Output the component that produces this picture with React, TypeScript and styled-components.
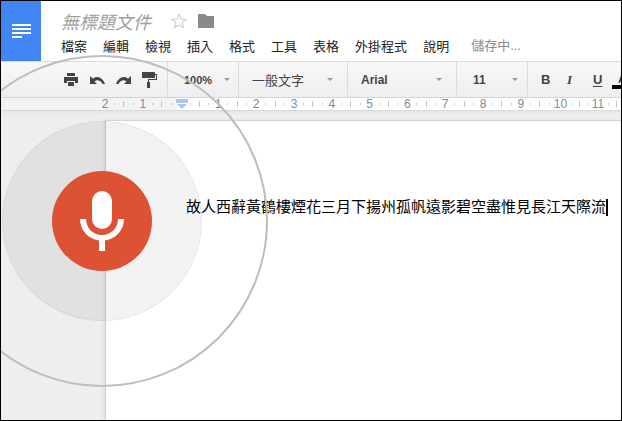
import React from "react";
import styled, { createGlobalStyle } from "styled-components";

const Global = createGlobalStyle`
  html, body { margin: 0; padding: 0; background: #fff; }
  #root { width: 622px; height: 421px; }
`;

const CJK = `"Liberation Sans", "Noto Sans CJK TC", sans-serif`;

const Frame = styled.div`
  position: relative;
  width: 622px;
  height: 421px;
  box-sizing: border-box;
  border: 1px solid #000;
  overflow: hidden;
  display: flex;
  flex-direction: column;
  background: #fff;
  font-family: ${CJK};
`;

const Header = styled.header`
  display: flex;
  height: 60px;
  flex: none;
`;

const Logo = styled.div`
  width: 40px;
  background: #4285f4;
  display: flex;
  align-items: center;
  justify-content: center;
`;

const Titles = styled.div`
  padding: 9px 0 0 20px;
  display: flex;
  flex-direction: column;
  gap: 5px;
`;

const TitleRow = styled.div`
  display: flex;
  align-items: center;
  height: 22px;
`;

const DocTitle = styled.span`
  font-size: 18px;
  font-style: italic;
  color: #a0a0a0;
  width: 110px;
`;

const StarIcon = styled.svg`
  flex: none;
`;

const FolderIcon = styled.svg`
  flex: none;
  margin-left: 11px;
`;

const MenuRow = styled.nav`
  display: flex;
  align-items: center;
  height: 17px;
`;

const MenuItem = styled.span`
  font-size: 13px;
  color: #222;
  margin-right: 16px;
`;

const Saving = styled.span`
  font-size: 13px;
  color: #8a8a8a;
  margin-left: 6px;
  margin-top: -3px;
`;

const Toolbar = styled.div`
  height: 37px;
  flex: none;
  box-sizing: border-box;
  display: flex;
  align-items: center;
  border-top: 1px solid #dcdcdc;
  border-bottom: 1px solid #d6d6d6;
  background: linear-gradient(#f8f8f8, #eeeeee);
  overflow: hidden;
  padding-left: 63px;
`;

const IconGroup = styled.div`
  display: flex;
  align-items: center;
  gap: 11px;
  width: 103px;
  flex: none;
  height: 100%;
`;

const Select = styled.div<{ $w: number; $left: number; $right: number; $size: number; $bold?: boolean }>`
  width: ${(p) => p.$w}px;
  flex: none;
  height: 100%;
  box-sizing: border-box;
  border-left: 1px solid #dcdcdc;
  display: flex;
  align-items: center;
  justify-content: space-between;
  padding: 0 ${(p) => p.$right}px 0 ${(p) => p.$left}px;
  font-size: ${(p) => p.$size}px;
  color: #444;
  font-weight: ${(p) => (p.$bold ? 700 : 400)};
`;

const Caret = styled.i`
  width: 0;
  height: 0;
  border-left: 3px solid transparent;
  border-right: 3px solid transparent;
  border-top: 3px solid #999;
`;

const Format = styled.div`
  border-left: 1px solid #dcdcdc;
  height: 100%;
  flex: none;
  display: flex;
  align-items: center;
  padding-left: 13px;
  font-size: 13px;
  font-weight: 700;
  color: #444;
`;

const FormatCell = styled.span`
  width: 26px;
  flex: none;
`;

const ItalicMark = styled(FormatCell)`
  font-style: italic;
  font-family: "Liberation Serif", serif;
`;

const UnderMark = styled(FormatCell)`
  text-decoration: underline;
  text-underline-offset: 2px;
`;

const ColorMark = styled.span`
  width: 14px;
  flex: none;
  margin-left: -7px;
  padding-left: 6px;
  height: 16px;
  margin-top: 3px;
  border-bottom: 4px solid #000;
  box-sizing: border-box;
  line-height: 12px;
  font-size: 11px;
`;

const Ruler = styled.div`
  height: 13px;
  flex: none;
  background: #fff;
  border-bottom: 1px solid #d9d9d9;
  box-sizing: border-box;
  display: flex;
  align-items: center;
  position: relative;
  overflow: hidden;
`;

const RulerMargin = styled.div`
  position: absolute;
  left: 0;
  top: 0;
  bottom: 0;
  width: 176px;
  background: #f3f3f3;
`;

const RulerTrack = styled.div`
  position: relative;
  display: flex;
  margin-left: 99.300px;
`;

const RulerCell = styled.div`
  width: 37.800px;
  flex: none;
  display: grid;
  grid-template-columns: repeat(4, 1fr);
  align-items: center;
  justify-items: center;
  font-size: 12px;
  line-height: 12px;
  color: #7f8c99;
`;

const Tick = styled.i<{ $h: number }>`
  width: 1px;
  height: ${(p) => p.$h}px;
  background: #c4c4c4;
`;

const IndentMark = styled.svg`
  position: absolute;
  left: 175px;
  top: 1px;
`;

const Canvas = styled.div`
  flex: 1;
  background: linear-gradient(#e6e6e6, #eeeeee 4px);
  padding: 9px 0 0 104px;
  display: flex;
`;

const Page = styled.main`
  flex: 1;
  background: #fff;
  border-top: 1px solid #d4d4d4;
  border-left: 1px solid #cfcfcf;
  box-shadow: -2px 0 3px rgba(0, 0, 0, 0.06);
  padding-top: 76px;
  padding-left: 80px;
`;

const Line = styled.div`
  font-size: 15px;
  line-height: 20px;
  color: #000;
  white-space: nowrap;
  display: flex;
  align-items: center;
`;

const Cursor = styled.i`
  display: inline-block;
  width: 2px;
  height: 17px;
  background: #000;
`;

const Ring = styled.div`
  position: absolute;
  left: -65px;
  top: 54px;
  width: 332px;
  height: 332px;
  box-sizing: border-box;
  border-radius: 50%;
  border: 2px solid #bdbdbd;
  pointer-events: none;
`;

const Halo = styled.div`
  position: absolute;
  left: 1px;
  top: 120px;
  width: 200px;
  height: 200px;
  box-sizing: border-box;
  border-radius: 50%;
  background: rgba(0, 0, 0, 0.05);
  border: 1px solid rgba(0, 0, 0, 0.05);
  display: flex;
  align-items: center;
  justify-content: center;
`;

const MicButton = styled.div`
  width: 100px;
  height: 100px;
  border-radius: 50%;
  background: #dd5233;
  display: flex;
  align-items: center;
  justify-content: center;
`;

const menus = ["檔案", "編輯", "檢視", "插入", "格式", "工具", "表格", "外掛程式", "說明"];

function RulerMarks() {
  const labels = ["2", "1", "", "1", "2", "3", "4", "5", "6", "7", "8", "9", "10", "11"];
  return (
    <RulerTrack>
      {labels.map((l, i) => (
        <RulerCell key={i}>
          <span>{l}</span>
          <Tick $h={2} />
          <Tick $h={6} />
          <Tick $h={2} />
        </RulerCell>
      ))}
    </RulerTrack>
  );
}

export default function App() {
  return (
    <>
      <Global />
      <Frame>
        <Header>
          <Logo>
            <svg width="19" height="14" viewBox="0 0 19 14" fill="#fff">
              <rect y="0" width="19" height="2" />
              <rect y="4" width="19" height="2" />
              <rect y="8" width="19" height="2" />
              <rect y="12" width="10" height="2" />
            </svg>
          </Logo>
          <Titles>
            <TitleRow>
              <DocTitle>無標題文件</DocTitle>
              <StarIcon width="16" height="16" viewBox="0 0 24 24" fill="none" stroke="#ccc" strokeWidth="1.6">
                <path d="M12 2l3 7 7.500.6-5.700 4.900 1.800 7.400L12 18l-6.600 3.900 1.800-7.400L1.500 9.600 9 9z" />
              </StarIcon>
              <FolderIcon width="16" height="14" viewBox="0 0 16 14" fill="#8a8a8a">
                <path d="M0 0h7l2 2h7v12H0z" />
              </FolderIcon>
            </TitleRow>
            <MenuRow>
              {menus.map((m) => (
                <MenuItem key={m}>{m}</MenuItem>
              ))}
              <Saving>儲存中...</Saving>
            </MenuRow>
          </Titles>
        </Header>
        <Toolbar>
          <IconGroup>
            <svg width="15" height="13" viewBox="0 0 15 13" fill="#444">
              <path d="M3 0h8v3H3zM0 4h14v6h-3V8H3v2H0zM4 9h6v4H4z" />
            </svg>
            <svg width="15" height="8" viewBox="0 0 15 8" fill="#444">
              <path d="M0 0v8h7L4.500 5.500C7 3.500 10.500 4 12.500 8H15C13 2 7-1 3 2.800z" />
            </svg>
            <svg width="15" height="8" viewBox="0 0 15 8" fill="#444">
              <path d="M15 0v8H8l2.500-2.500C8 3.500 4.500 4 2.500 8H0C2 2 8-1 12 2.800z" />
            </svg>
            <svg width="15" height="16" viewBox="0 0 15 16" fill="#444">
              <path d="M0 0h13v6H0zM13 2h2v6H7v2h1v6H5v-6h1V7h8V3h-1z" />
            </svg>
          </IconGroup>
          <Select $w={71} $left={16} $right={8} $size={11} $bold>
            100%
            <Caret />
          </Select>
          <Select $w={109} $left={13} $right={14} $size={13}>
            一般文字
            <Caret />
          </Select>
          <Select $w={109} $left={13} $right={14} $size={12} $bold>
            Arial
            <Caret />
          </Select>
          <Select $w={71} $left={16} $right={9} $size={12} $bold>
            11
            <Caret />
          </Select>
          <Format>
            <FormatCell>B</FormatCell>
            <ItalicMark>I</ItalicMark>
            <UnderMark>U</UnderMark>
            <ColorMark>A</ColorMark>
          </Format>
        </Toolbar>
        <Ruler>
          <RulerMargin />
          <RulerMarks />
          <IndentMark width="12" height="10" viewBox="0 0 12 10">
            <rect width="12" height="4" fill="#a9c4f5" />
            <path d="M1 5h10L6 10z" fill="#a9c4f5" />
          </IndentMark>
        </Ruler>
        <Canvas>
          <Page>
            <Line>
              故人西辭黃鶴樓煙花三月下揚州孤帆遠影碧空盡惟見長江天際流
              <Cursor />
            </Line>
          </Page>
        </Canvas>
        <Ring />
        <Halo>
          <MicButton>
            <svg width="44" height="60" viewBox="0 0 44 60" fill="#fff">
              <rect x="12" y="0" width="20" height="38" rx="10" />
              <path d="M0 28h6c0 9 7 16 16 16s16-7 16-16h6c0 11-8 20-19 21.500V60h-6V49.500C8 48 0 39 0 28z" />
            </svg>
          </MicButton>
        </Halo>
      </Frame>
    </>
  );
}
